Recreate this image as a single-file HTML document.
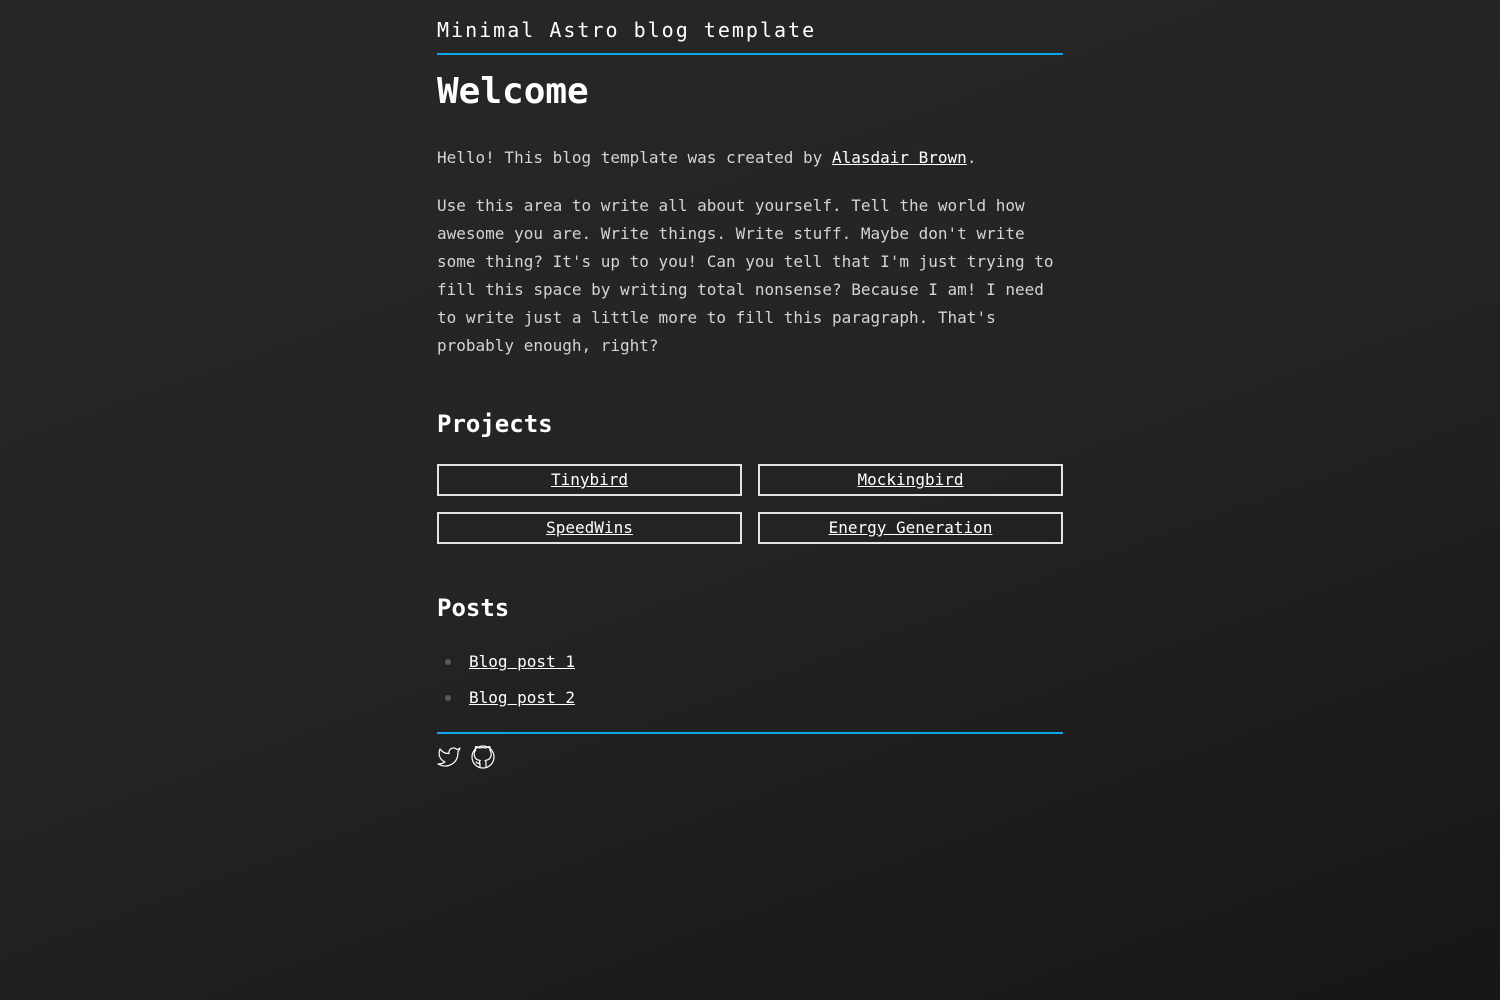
<!DOCTYPE html>
<html><head><meta charset="utf-8"><style>
html,body{margin:0;height:1000px;}
body{background:linear-gradient(160deg,#272727 0%,#242424 50%,#161616 100%);color:#d4d4d8;font-family:"DejaVu Sans Mono","Liberation Mono",monospace;font-size:16px;}
.w{position:absolute;left:437px;width:626px;top:1px;}
.t{position:absolute;top:16px;font-size:20px;letter-spacing:2px;color:#fff;line-height:26px;}
.hr{position:absolute;left:0;width:626px;height:2px;background:#0ea5e9;}
h1{position:absolute;top:70px;margin:0;font-size:36px;line-height:42px;color:#fff;}
h2{position:absolute;margin:0;font-size:24px;line-height:30px;color:#fff;}
p{position:absolute;margin:0;line-height:28px;width:626px;}
a{color:#fff;text-decoration:underline;}
.b{position:absolute;width:301px;height:28px;border:2px solid #e4e4e7;text-align:center;line-height:28px;box-sizing:content-box;}
.li{position:absolute;left:32px;line-height:28px;}
.dot{position:absolute;left:8px;width:6px;height:6px;border-radius:3px;background:#555b66;}
</style></head><body><div class="w">
<div class="t">Minimal Astro blog template</div>
<div class="hr" style="top:52px"></div>
<h1>Welcome</h1>
<p style="top:143px">Hello! This blog template was created by <a>Alasdair Brown</a>.</p>
<p style="top:191px">Use this area to write all about yourself. Tell the world how awesome you are. Write things. Write stuff. Maybe don't write some thing? It's up to you! Can you tell that I'm just trying to fill this space by writing total nonsense? Because I am! I need to write just a little more to fill this paragraph. That's probably enough, right?</p>
<h2 style="top:408px">Projects</h2>
<div class="b" style="left:0;top:463px"><a>Tinybird</a></div>
<div class="b" style="left:321px;top:463px"><a>Mockingbird</a></div>
<div class="b" style="left:0;top:511px"><a>SpeedWins</a></div>
<div class="b" style="left:321px;top:511px"><a>Energy Generation</a></div>
<h2 style="top:592px">Posts</h2>
<div class="dot" style="top:658px"></div><div class="li" style="top:647px"><a>Blog post 1</a></div>
<div class="dot" style="top:694px"></div><div class="li" style="top:683px"><a>Blog post 2</a></div>
<div class="hr" style="top:731px"></div>
<svg style="position:absolute;left:0;top:744px" width="24" height="24" viewBox="0 0 24 24" fill="none" stroke="#fff" stroke-width="1.2" stroke-linejoin="round"><path d="M23 3a10.9 10.9 0 0 1-3.14 1.53 4.48 4.48 0 0 0-7.86 3v1A10.66 10.66 0 0 1 3 4s-4 9 5 13a11.64 11.64 0 0 1-7 2c9 5 20 0 20-11.5a4.5 4.5 0 0 0-.08-.83A7.72 7.72 0 0 0 23 3z"/></svg>
<svg style="position:absolute;left:34px;top:744px" width="24" height="24" viewBox="0 0 24 24" fill="none" stroke="#fff" stroke-width="1.2" stroke-linejoin="round"><circle cx="12" cy="12" r="11"/><path d="M9 22v-3.5c-3 .6-3.6-1.4-4.2-2M15 22v-3.9a3.4 3.4 0 0 0-.9-2.6c3-.3 6.1-1.5 6.1-6.7a5.2 5.2 0 0 0-1.4-3.6 4.8 4.8 0 0 0-.1-3.6s-1.1-.3-3.700 1.4a12.7 12.7 0 0 0-6.6 0C5.8 1.3 4.7 1.6 4.7 1.6a4.8 4.8 0 0 0-.1 3.6 5.2 5.2 0 0 0-1.4 3.6c0 5.2 3.1 6.4 6.1 6.7a3.4 3.4 0 0 0-.9 2.6"/></svg>
</div></body></html>
